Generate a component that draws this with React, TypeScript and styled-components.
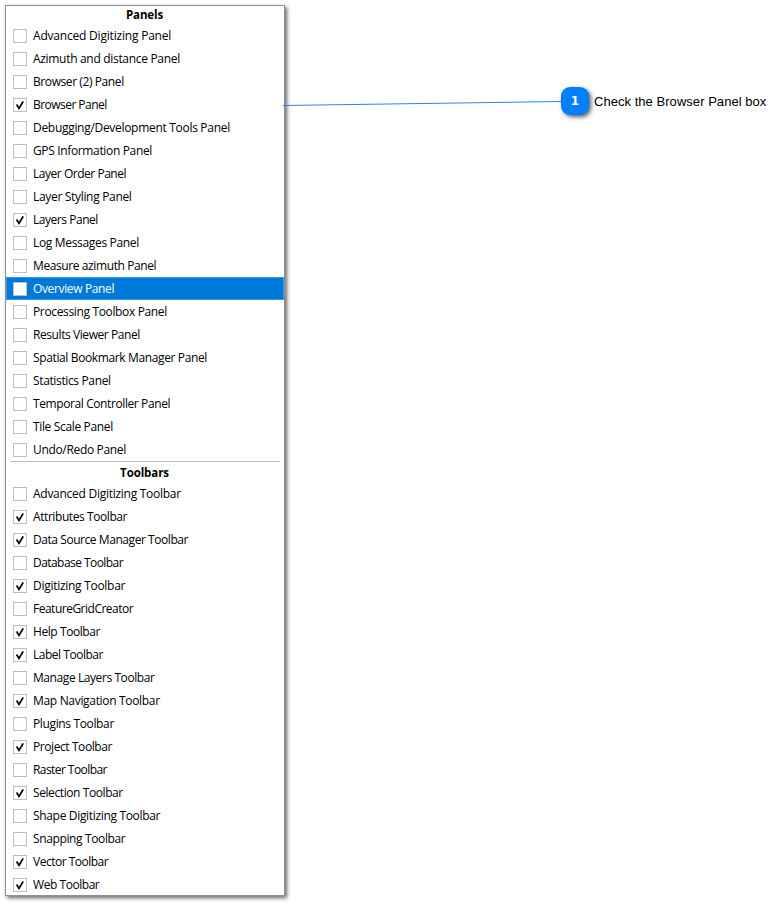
import React from "react";
import styled, { createGlobalStyle } from "styled-components";

const GlobalStyle = createGlobalStyle`
  body { margin: 0; background: #fff; overflow: hidden; }
`;

const Page = styled.main`
  position: relative;
  box-sizing: border-box;
  width: 782px;
  height: 905px;
  padding: 5px 0 0 5px;
  background: #fff;
`;

const Menu = styled.section`
  box-sizing: border-box;
  display: flex;
  flex-direction: column;
  width: 280px;
  height: 891px;
  border: 1px solid #909090;
  background: #fff;
  box-shadow: 2px 2px 4px rgba(0, 0, 0, 0.6);
  font-family: "Open Sans", "Noto Sans", sans-serif;
  font-size: 12px;
  color: #000;
`;

const Heading = styled.h2`
  flex: none;
  margin: 0;
  height: 18px;
  line-height: 18px;
  padding-right: 1px;
  font-size: 11.5px;
  font-weight: 700;
  letter-spacing: -0.1px;
  text-align: center;
`;

const Separator = styled.hr`
  flex: none;
  width: 270px;
  height: 1px;
  margin: 0 0 2px 4px;
  border: 0;
  background: #bdbdbd;
`;

const List = styled.ul`
  margin: 0;
  padding: 0;
  list-style: none;
`;

const Row = styled.li<{ $active?: boolean }>`
  box-sizing: border-box;
  display: flex;
  align-items: center;
  gap: 6px;
  height: 23px;
  padding: 0 0 0 7px;
  white-space: nowrap;
  color: ${(p) => (p.$active ? "#fff" : "#000")};
  background: ${(p) => (p.$active ? "#0078d7" : "transparent")};
  box-shadow: ${(p) => (p.$active ? "inset 0 0 0 1px #2f9bf0" : "none")};
`;

const Box = styled.span`
  box-sizing: border-box;
  display: flex;
  flex: none;
  width: 14px;
  height: 14px;
  margin-top: 1px;
  border: 1px solid #bfbfbf;
  background: #fff;
`;

const Label = styled.span<{ $spacing: number }>`
  line-height: 23px;
  letter-spacing: ${(p) => p.$spacing}px;
`;

const Leader = styled.svg`
  position: absolute;
  left: 283px;
  top: 98px;
`;

const Callout = styled.div`
  position: absolute;
  left: 561px;
  top: 87px;
  display: flex;
  align-items: center;
  gap: 5px;
  font-family: "Liberation Sans", Arial, sans-serif;
  font-size: 13px;
  letter-spacing: 0.04px;
  white-space: nowrap;
  color: #000;
`;

const Badge = styled.span`
  width: 28px;
  height: 28px;
  border-radius: 9px;
  background: #0080ff;
  box-shadow: 2px 2px 4px rgba(0, 0, 0, 0.65);
  color: #fff;
  font-family: "DejaVu Sans", Verdana, sans-serif;
  font-size: 12px;
  font-weight: 700;
  line-height: 29px;
  text-align: center;
`;

type Item = { label: string; spacing: number; checked?: boolean; active?: boolean };

const panels: Item[] = [
  { label: "Advanced Digitizing Panel", spacing: -0.2 },
  { label: "Azimuth and distance Panel", spacing: -0.31 },
  { label: "Browser (2) Panel", spacing: -0.41 },
  { label: "Browser Panel", spacing: -0.54, checked: true },
  { label: "Debugging/Development Tools Panel", spacing: -0.3 },
  { label: "GPS Information Panel", spacing: -0.35 },
  { label: "Layer Order Panel", spacing: -0.47 },
  { label: "Layer Styling Panel", spacing: -0.32 },
  { label: "Layers Panel", spacing: -0.46, checked: true },
  { label: "Log Messages Panel", spacing: -0.33 },
  { label: "Measure azimuth Panel", spacing: -0.4 },
  { label: "Overview Panel", spacing: -0.36, active: true },
  { label: "Processing Toolbox Panel", spacing: -0.35 },
  { label: "Results Viewer Panel", spacing: -0.42 },
  { label: "Spatial Bookmark Manager Panel", spacing: -0.37 },
  { label: "Statistics Panel", spacing: -0.36 },
  { label: "Temporal Controller Panel", spacing: -0.4 },
  { label: "Tile Scale Panel", spacing: -0.35 },
  { label: "Undo/Redo Panel", spacing: -0.33 },
];

const toolbars: Item[] = [
  { label: "Advanced Digitizing Toolbar", spacing: -0.27 },
  { label: "Attributes Toolbar", spacing: -0.42, checked: true },
  { label: "Data Source Manager Toolbar", spacing: -0.44, checked: true },
  { label: "Database Toolbar", spacing: -0.55 },
  { label: "Digitizing Toolbar", spacing: -0.28, checked: true },
  { label: "FeatureGridCreator", spacing: -0.5 },
  { label: "Help Toolbar", spacing: -0.42, checked: true },
  { label: "Label Toolbar", spacing: -0.48, checked: true },
  { label: "Manage Layers Toolbar", spacing: -0.42 },
  { label: "Map Navigation Toolbar", spacing: -0.32, checked: true },
  { label: "Plugins Toolbar", spacing: -0.36 },
  { label: "Project Toolbar", spacing: -0.42, checked: true },
  { label: "Raster Toolbar", spacing: -0.57 },
  { label: "Selection Toolbar", spacing: -0.41, checked: true },
  { label: "Shape Digitizing Toolbar", spacing: -0.33 },
  { label: "Snapping Toolbar", spacing: -0.37 },
  { label: "Vector Toolbar", spacing: -0.5, checked: true },
  { label: "Web Toolbar", spacing: -0.45, checked: true },
];

const Check = () => (
  <svg width="12" height="12" viewBox="0 0 12 12" fill="none">
    <path d="M2.6 5.6L5 9.4L9.2 2.4" stroke="#000" strokeWidth="1.8" />
  </svg>
);

const Items = ({ items }: { items: Item[] }) => (
  <List>
    {items.map((item) => (
      <Row key={item.label} $active={item.active}>
        <Box>{item.checked && <Check />}</Box>
        <Label $spacing={item.spacing}>{item.label}</Label>
      </Row>
    ))}
  </List>
);

export default function App() {
  return (
    <Page>
      <GlobalStyle />
      <Menu>
        <Heading>Panels</Heading>
        <Items items={panels} />
        <Separator />
        <Heading>Toolbars</Heading>
        <Items items={toolbars} />
      </Menu>
      <Leader width="279" height="10" viewBox="0 0 279 10">
        <path d="M0 7.5L279 3.5" stroke="#1f88f0" strokeWidth="1.1" />
      </Leader>
      <Callout>
        <Badge>1</Badge>
        <span>Check the Browser Panel box</span>
      </Callout>
    </Page>
  );
}
